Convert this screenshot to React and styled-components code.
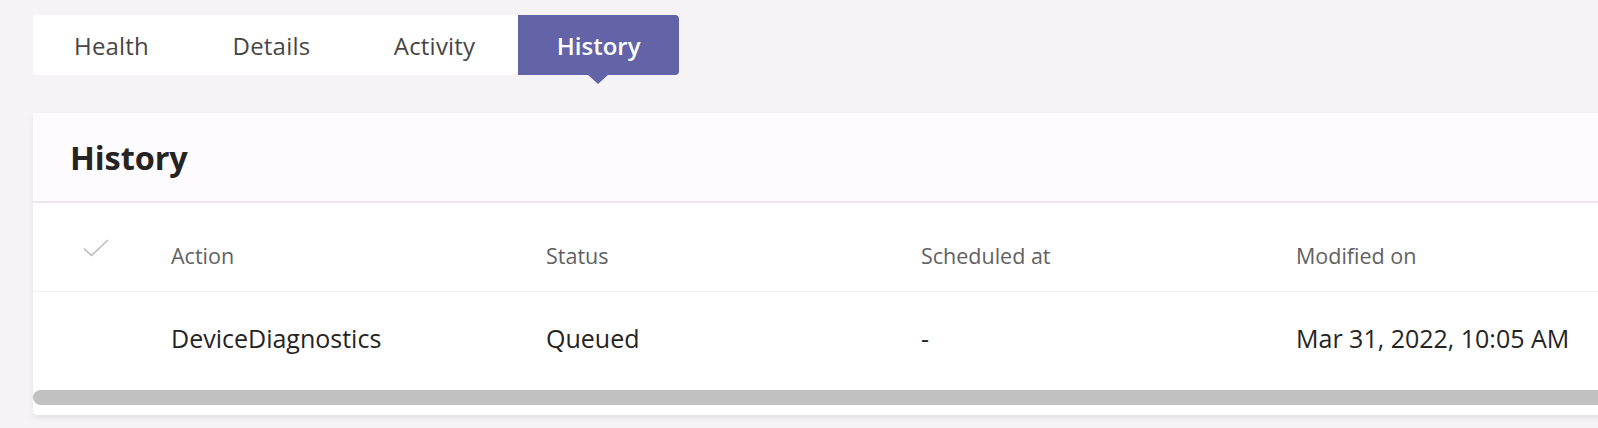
import React from 'react';
import styled, {createGlobalStyle} from 'styled-components';

const GlobalStyle = createGlobalStyle`
    html, body {
        margin: 0;
        padding: 0;
        background: #f5f3f6;
        overflow: hidden;
    }
    body {
        font-family: "Segoe UI", "Open Sans", "Noto Sans", sans-serif;
    }
`;

const Page = styled.div`
    padding: 15px 0 0 33px;
    height: 428px;
    box-sizing: border-box;
    display: flex;
    flex-direction: column;
    gap: 38px;
`;

// 탭 바
const TabBar = styled.div`
    display: flex;
    align-self: flex-start;
    height: 60px;
    background: #ffffff;
    border-radius: 4px;
`;

const Tab = styled.div`
    position: relative;
    display: flex;
    align-items: center;
    padding: ${({active}) => (active ? '0 38px 0 39px' : '0 42.5px 0 41px')};
    font-size: 24px;
    letter-spacing: ${({active}) => (active ? '0' : '0.2px')};
    font-weight: ${({active}) => (active ? 600 : 400)};
    color: ${({active}) => (active ? '#ffffff' : '#484644')};
    background: ${({active}) => (active ? '#6264a7' : 'transparent')};
    border-radius: ${({active}) => (active ? '0 4px 4px 0' : '0')};

    &::after {
        content: '';
        display: ${({active}) => (active ? 'block' : 'none')};
        position: absolute;
        left: 50%;
        bottom: -9px;
        transform: translateX(-50%);
        border-left: 11px solid transparent;
        border-right: 11px solid transparent;
        border-top: 10px solid #6264a7;
    }
`;

const Card = styled.div`
    width: 1700px;
    background: #ffffff;
    border-radius: 4px 0 0 4px;
    box-shadow: 0 3px 6px rgba(0, 0, 0, 0.08);
`;

const CardHeader = styled.div`
    height: 88px;
    display: flex;
    align-items: center;
    padding-left: 37px;
    background: #fdfbfd;
    border-bottom: 2px solid #e9e7e9;
    border-radius: 4px 0 0 0;
`;

const Title = styled.h2`
    margin: 0;
    font-size: 32.5px;
    font-weight: 700;
    color: #252423;
    letter-spacing: -0.1px;
`;

const Row = styled.div`
    display: grid;
    grid-template-columns: 138px repeat(4, 375px) 1fr;
    align-items: center;
    height: ${({head}) => (head ? '88px' : '92px')};
    border-bottom: ${({head}) => (head ? '1px solid #f1eff1' : 'none')};
`;

const CheckCell = styled.div`
    display: flex;
    justify-content: flex-end;
    padding-right: 62px;
    padding-top: 2px;
`;

const HeadCell = styled.div`
    padding-top: 16px;
    font-size: 21.5px;
    color: #616161;
`;

const Cell = styled.div`
    font-size: 25px;
    color: #252423;
`;

const ScrollTrack = styled.div`
    padding-top: 6px;
    padding-bottom: 10px;
`;

const ScrollThumb = styled.div`
    height: 15px;
    background: #c1c1c1;
    border-radius: 8px 0 0 8px;
`;

const CheckIcon = () => (
    <svg width="26" height="18" viewBox="0 0 26 18" fill="none">
        <polyline points="1,9.5 8.5,16.5 25,1" stroke="#b8b6b8" strokeWidth="1.4"/>
    </svg>
);

const tabs = ['Health', 'Details', 'Activity', 'History'];
const columns = ['Action', 'Status', 'Scheduled at', 'Modified on'];
const rows = [
    ['DeviceDiagnostics', 'Queued', '-', 'Mar 31, 2022, 10:05 AM'],
];

export default function App() {
    return (
        <>
            <GlobalStyle/>
            <Page>
                <TabBar>
                    {tabs.map((t) => (
                        <Tab key={t} active={t === 'History'}>{t}</Tab>
                    ))}
                </TabBar>
                <Card>
                    <CardHeader>
                        <Title>History</Title>
                    </CardHeader>
                    <Row head>
                        <CheckCell><CheckIcon/></CheckCell>
                        {columns.map((c) => <HeadCell key={c}>{c}</HeadCell>)}
                    </Row>
                    {rows.map((r) => (
                        <Row key={r[0]}>
                            <div/>
                            {r.map((v, i) => <Cell key={i}>{v}</Cell>)}
                        </Row>
                    ))}
                    <ScrollTrack>
                        <ScrollThumb/>
                    </ScrollTrack>
                </Card>
            </Page>
        </>
    );
}
